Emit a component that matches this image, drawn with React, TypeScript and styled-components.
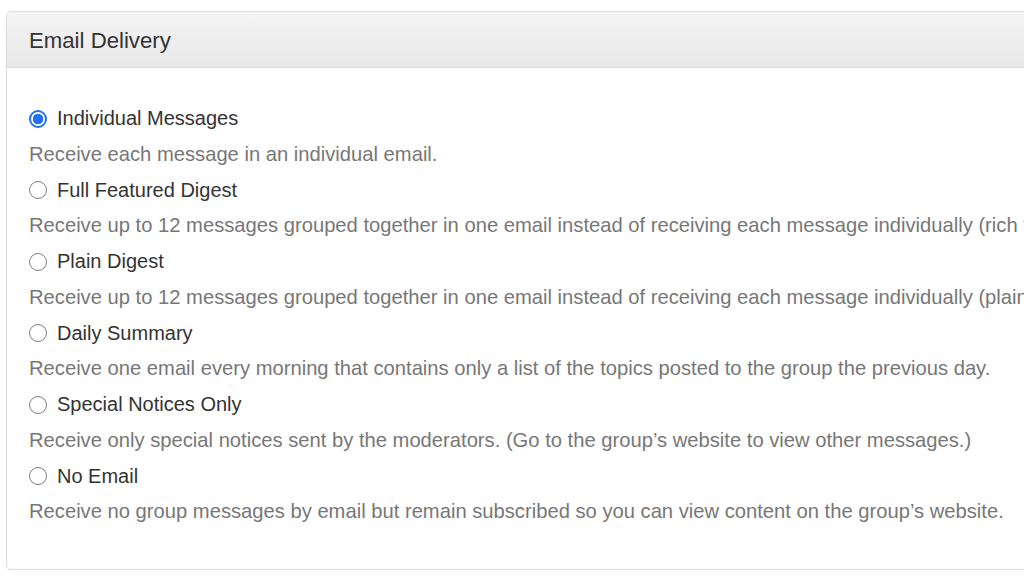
import React, { useState } from 'react'
import styled, { createGlobalStyle } from 'styled-components'

const GlobalStyle = createGlobalStyle`
  html, body {
    margin: 0;
    padding: 0;
    background: #fff;
    overflow: hidden;
    font-family: "Liberation Sans", Arial, Helvetica, sans-serif;
  }
`

const Page = styled('div')({
  padding: '11px 0 0 6px',
  width: '1400px',
})

const Panel = styled('section')({
  width: '1300px',
  border: '1px solid #dcdcdc',
  borderRadius: '5px',
  overflow: 'hidden',
  boxShadow: '0 1px 1px rgba(0, 0, 0, 0.05)',
})

const Header = styled('header')({
  height: '56px',
  display: 'flex',
  alignItems: 'center',
  padding: '2px 22px 0',
  boxSizing: 'border-box',
  background: 'linear-gradient(to bottom, #f5f5f5 0%, #e8e8e8 100%)',
  borderBottom: '1px solid #dcdcdc',
  color: '#333',
  fontSize: '22.2px',
})

const Body = styled('div')({
  padding: '33px 22px 39px',
})

const Option = styled('label')({
  display: 'flex',
  alignItems: 'center',
  gap: '10px',
  height: '35.75px',
  color: '#333',
  fontSize: '20px',
  cursor: 'pointer',
})

const Radio = styled('input')({
  appearance: 'none',
  margin: 0,
  width: '18px',
  height: '18px',
  borderRadius: '50%',
  border: '1px solid #7d7d7d',
  background: '#fff',
  flex: 'none',
  boxSizing: 'border-box',
  '&:checked': {
    border: '2px solid #2272f0',
    background: 'radial-gradient(circle, #2272f0 0 5px, #fff 5.5px)',
  },
})

const Description = styled('div')({
  height: '35.75px',
  lineHeight: '35.75px',
  color: '#777',
  fontSize: '20.2px',
  whiteSpace: 'nowrap',
})

const options = [
  {
    id: 'single',
    label: 'Individual Messages',
    description: 'Receive each message in an individual email.',
  },
  {
    id: 'digest',
    label: 'Full Featured Digest',
    description:
      'Receive up to 12 messages grouped together in one email instead of receiving each message individually (rich text format).',
  },
  {
    id: 'plain',
    label: 'Plain Digest',
    description:
      'Receive up to 12 messages grouped together in one email instead of receiving each message individually (plain text format).',
  },
  {
    id: 'summary',
    label: 'Daily Summary',
    description:
      'Receive one email every morning that contains only a list of the topics posted to the group the previous day.',
  },
  {
    id: 'special',
    label: 'Special Notices Only',
    description:
      'Receive only special notices sent by the moderators. (Go to the group\u2019s website to view other messages.)',
  },
  {
    id: 'none',
    label: 'No Email',
    description:
      'Receive no group messages by email but remain subscribed so you can view content on the group\u2019s website.',
  },
]

export default function App(): JSX.Element {
  const [delivery, setDelivery] = useState<string>('single')

  return (
    <Page>
      <GlobalStyle />
      <Panel>
        <Header>Email Delivery</Header>
        <Body>
          {options.map((o) => (
            <div key={o.id}>
              <Option>
                <Radio
                  type="radio"
                  name="delivery"
                  value={o.id}
                  checked={delivery === o.id}
                  onChange={() => setDelivery(o.id)}
                />
                {o.label}
              </Option>
              <Description>{o.description}</Description>
            </div>
          ))}
        </Body>
      </Panel>
    </Page>
  )
}
